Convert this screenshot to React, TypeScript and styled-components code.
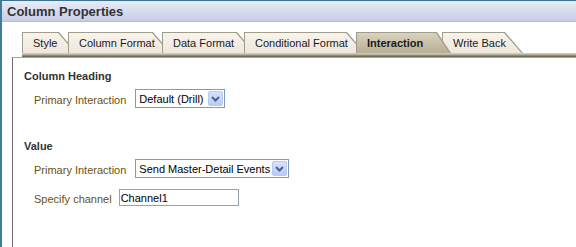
import React from 'react';
import styled, { createGlobalStyle } from 'styled-components';

const GlobalStyle = createGlobalStyle`
  body {
    margin: 0;
    background: #fff;
    font-family: "Liberation Sans", Arial, sans-serif;
  }
`;

const Window = styled.div`
  width: 576px;
  height: 247px;
  box-sizing: border-box;
  border-left: 2px solid #3d7c9c;
  background: #fff;
  overflow: hidden;
  display: flex;
  flex-direction: column;
`;

const TitleBar = styled.div`
  height: 22px;
  box-sizing: border-box;
  border-top: 1px solid #3a7494;
  border-bottom: 1px solid #b3bddb;
  background: linear-gradient(#e8ebf6, #c6cde6);
  padding: 2px 0 0 5px;
  font-weight: bold;
  font-size: 13px;
  line-height: 18px;
  color: #333;
`;

const TabStrip = styled.div`
  display: flex;
  margin: 10px 0 0 20px;
  height: 21px;
`;

const Tab = styled.div<{ $w: number; $slant?: number; $active?: boolean; $overlap?: number }>`
  position: relative;
  z-index: ${(p) => (p.$active ? 2 : 'auto')};
  flex: none;
  width: ${(p) => p.$w + (p.$slant ?? 18)}px;
  height: 21px;
  margin-right: -${(p) => p.$overlap ?? 0}px;
  box-sizing: border-box;
  padding-left: 11px;
  background: #a19d8d;
  clip-path: polygon(0 0, ${(p) => p.$w}px 0, 100% 100%, 0 100%);
  font-size: 11px;
  font-weight: ${(p) => (p.$active ? 'bold' : 'normal')};
  line-height: 22px;
  color: #1a1a1a;

  &::before {
    content: '';
    position: absolute;
    inset: 1px 0 0 1px;
    background: ${(p) =>
      p.$active
        ? 'linear-gradient(#d9d2bd, #b7ae93)'
        : 'linear-gradient(#f8f3ec, #efe7dc)'};
    clip-path: polygon(0 0, ${(p) => p.$w - 2}px 0, calc(100% - 1.5px) 100%, 0 100%);
  }

  & span {
    position: relative;
  }
`;

const TabRule = styled.div`
  height: 4px;
  margin-left: 20px;
  background: linear-gradient(#d2cab3 0 1px, #b9b198 1px 2px, #8d897b 2px 3px, #6f6c62 3px);
`;

const Panel = styled.div`
  flex: 1;
  margin-left: 10px;
  border-left: 1px solid #6b6b6b;
  border-top: 1px solid #a3a3a3;
  padding: 11px 0 0 11px;
`;

const Heading = styled.div<{ $gap?: number }>`
  margin-top: ${(p) => p.$gap ?? 0}px;
  font-size: 11px;
  font-weight: bold;
  line-height: 14px;
  color: #333;
`;

const Row = styled.div<{ $gap: number }>`
  display: flex;
  align-items: center;
  gap: 8px;
  margin-top: ${(p) => p.$gap}px;
  padding-left: 10px;
`;

const Label = styled.span`
  padding-top: 2px;
  font-size: 11px;
  line-height: 14px;
  color: #6a520e;
`;

const Select = styled.div<{ $w: number }>`
  display: flex;
  align-items: center;
  width: ${(p) => p.$w}px;
  height: 19px;
  box-sizing: border-box;
  margin-left: 1px;
  padding-left: 3px;
  border: 1px solid #7f9db9;
  background: #fff;
  font-size: 11px;
  color: #000;
`;

const DropButton = styled.span`
  display: flex;
  align-items: center;
  justify-content: center;
  width: 15px;
  height: 15px;
  box-sizing: border-box;
  margin: 0 1px 0 auto;
  border: 1px solid #b7c9f4;
  border-radius: 2px;
  background: linear-gradient(#d6e1fd, #b9cbf7);
`;

const TextInput = styled.input`
  width: 120px;
  height: 17px;
  box-sizing: border-box;
  margin: 0 0 0 -1px;
  padding: 0 1px;
  border: 1px solid #8ea3b8;
  font-family: "Liberation Sans", Arial, sans-serif;
  font-size: 11px;
  color: #000;
  outline: none;
`;

const Chevron = () => (
  <svg width="9" height="6" viewBox="0 0 9 6">
    <path d="M1 1 L4.5 4.5 L8 1" fill="none" stroke="#4d6185" strokeWidth="2" />
  </svg>
);

const tabs = [
  { text: 'Style', w: 37, overlap: 9 },
  { text: 'Column Format', w: 85, overlap: 9 },
  { text: 'Data Format', w: 75, overlap: 11 },
  { text: 'Conditional Format', w: 103, overlap: 9 },
  { text: 'Interaction', w: 81, overlap: 9, slant: 14, active: true },
  { text: 'Write Back', w: 63, overlap: 0 },
];

function App() {
  return (
    <Window>
      <GlobalStyle />
      <TitleBar>Column Properties</TitleBar>
      <TabStrip>
        {tabs.map((t) => (
          <Tab key={t.text} $w={t.w} $slant={t.slant} $overlap={t.overlap} $active={t.active}>
            <span>{t.text}</span>
          </Tab>
        ))}
      </TabStrip>
      <TabRule />
      <Panel>
        <Heading>Column Heading</Heading>
        <Row $gap={6}>
          <Label>Primary Interaction</Label>
          <Select $w={90}>
            Default (Drill)
            <DropButton>
              <Chevron />
            </DropButton>
          </Select>
        </Row>
        <Heading $gap={31}>Value</Heading>
        <Row $gap={6}>
          <Label>Primary Interaction</Label>
          <Select $w={154}>
            Send Master-Detail Events
            <DropButton>
              <Chevron />
            </DropButton>
          </Select>
        </Row>
        <Row $gap={11}>
          <Label>Specify channel</Label>
          <TextInput defaultValue="Channel1" readOnly />
        </Row>
      </Panel>
    </Window>
  );
}

export default App;
